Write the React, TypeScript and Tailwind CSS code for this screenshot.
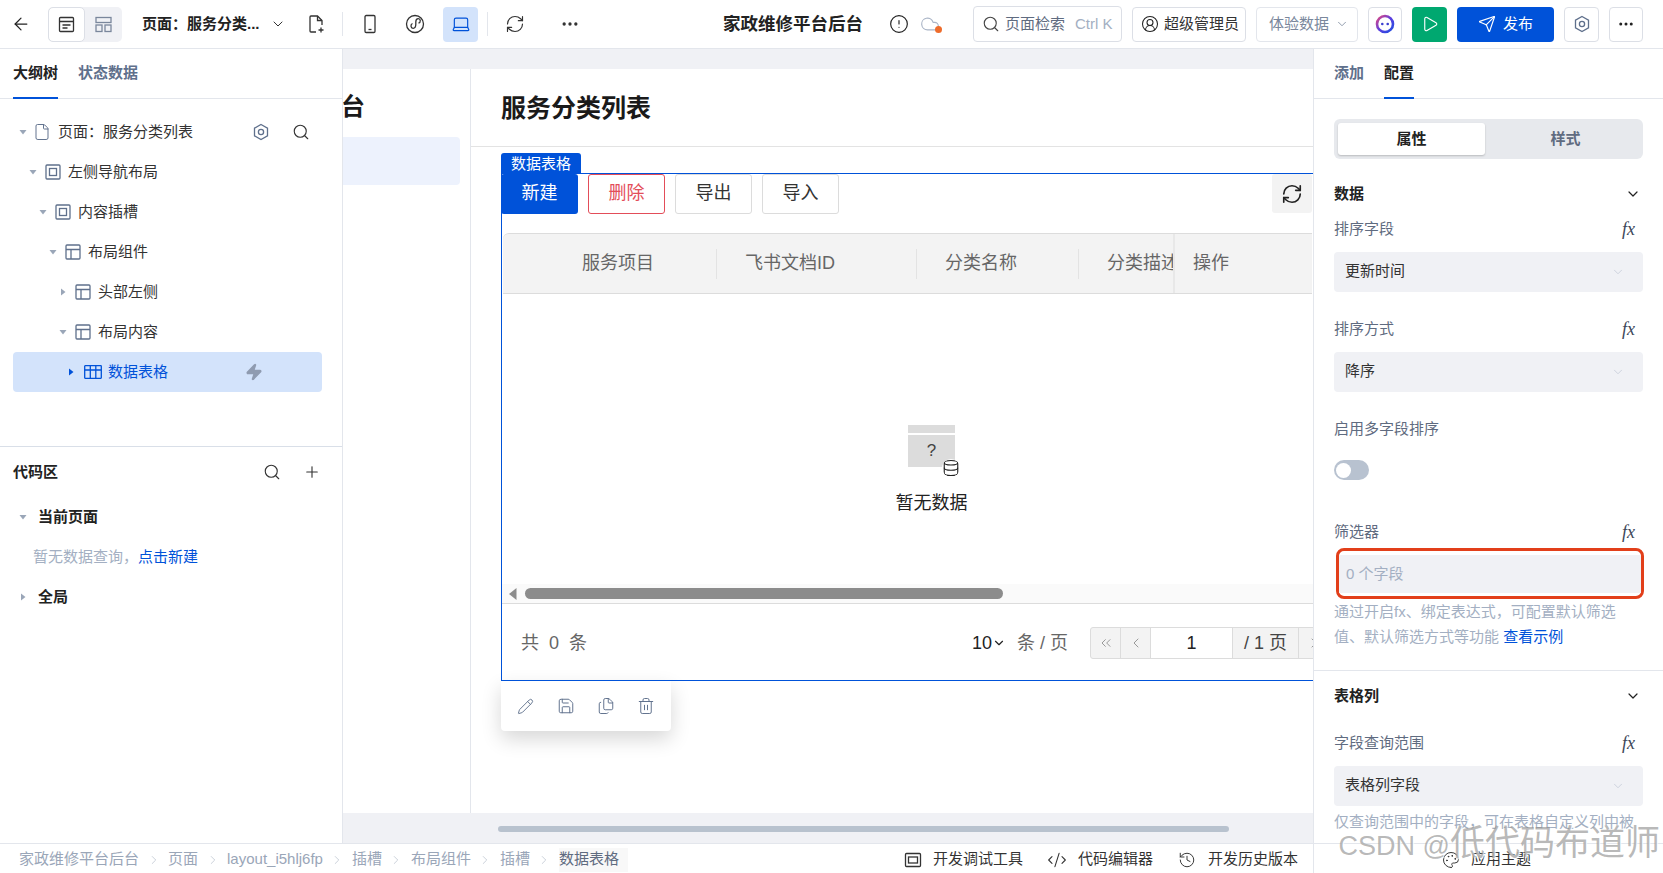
import { ArrowLeft, ChevronDown, ChevronLeft, ChevronRight, ChevronsLeft, CircleAlert, Cloud, CodeXml, Files, Ellipsis, File, History, Laptop, Palette, Pencil, Play, Plus, RefreshCw, Save, Search, Send, Trash2, Zap, CircleUserRound, Database } from "lucide-react";

function Caret({ open, color = "#9aa6b8" }: { open: boolean; color?: string }) {
  return (
    <svg width="10" height="10" viewBox="0 0 10 10" className="flex-none">
      {open ? <path d="M1.5 3h7L5 7.5z" fill={color} /> : <path d="M3 1.5v7L7.5 5z" fill={color} />}
    </svg>
  );
}

function HexIcon({ size = 18 }: { size?: number }) {
  return (
    <svg width={size} height={size} viewBox="0 0 18 18" fill="none" stroke="currentColor" strokeWidth="1.3" className="flex-none">
      <path d="M9 1.5l6.5 3.7v7.6L9 16.5l-6.5-3.7V5.200z" />
      <circle cx="9" cy="9" r="2.600" />
    </svg>
  );
}

function SlotIcon() {
  return (
    <svg width="16" height="16" viewBox="0 0 16 16" fill="none" stroke="#5f708c" strokeWidth="1.300" className="flex-none">
      <rect x="1" y="1" width="14" height="14" rx="1" />
      <rect x="4.500" y="4.500" width="7" height="7" />
    </svg>
  );
}

function LayoutIcon() {
  return (
    <svg width="16" height="16" viewBox="0 0 16 16" fill="none" stroke="#5f708c" strokeWidth="1.300" className="flex-none">
      <rect x="1" y="1" width="14" height="14" rx="1" />
      <path d="M1 5.500h14M6 5.500V15" />
    </svg>
  );
}

function GridIcon() {
  return (
    <svg width="18" height="14" viewBox="0 0 18 14" fill="none" stroke="#0052d9" strokeWidth="1.300" className="flex-none">
      <rect x="0.700" y="0.700" width="16.600" height="12.600" rx="0.500" />
      <path d="M0.700 5h16.600M6.300 0.700v12.600M11.800 0.700v12.600" />
    </svg>
  );
}

function Fx() {
  return <span className="[font-family:'Liberation_Serif',serif] italic text-[18px] leading-none text-[#3c4658]">fx</span>;
}

const treeRows = [
  { label: "左侧导航布局", pl: "pl-[15px]", open: true, icon: <SlotIcon /> },
  { label: "内容插槽", pl: "pl-[25px]", open: true, icon: <SlotIcon /> },
  { label: "布局组件", pl: "pl-[35px]", open: true, icon: <LayoutIcon /> },
  { label: "头部左侧", pl: "pl-[45px]", open: false, icon: <LayoutIcon /> },
  { label: "布局内容", pl: "pl-[45px]", open: true, icon: <LayoutIcon /> },
];

function TopBar() {
  return (
    <div className="h-[49px] flex-none flex items-center border-b border-[#e3e6ec] bg-white text-[15px] whitespace-nowrap">
      <ArrowLeft size={20} strokeWidth={1.5} className="ml-[11px] flex-none text-[#222]" />
      <div className="ml-[17px] flex h-[35px] w-[74px] flex-none rounded-[5px] bg-[#f0f1f5]">
        <div className="flex w-[37px] items-center justify-center rounded-[5px] border border-[#dcdfe6] bg-white">
          <svg width="17" height="17" viewBox="0 0 17 17" fill="none" stroke="#333" strokeWidth="1.300"><rect x="1.500" y="1.500" width="14" height="14" rx="1" /><path d="M1.500 5.500h14M4.500 9h8M4.500 12h5" /></svg>
        </div>
        <div className="flex w-[37px] items-center justify-center">
          <svg width="17" height="17" viewBox="0 0 17 17" fill="none" stroke="#7a879c" strokeWidth="1.300"><rect x="1" y="1.500" width="15" height="5" /><rect x="1" y="9" width="6" height="6.500" /><rect x="10" y="9" width="6" height="6.500" /></svg>
        </div>
      </div>
      <span className="ml-[20px] w-[116px] flex-none font-bold text-[#222]">页面：服务分类...</span>
      <ChevronDown size={16} strokeWidth={1.5} className="ml-[12px] flex-none text-[#333]" />
      <svg width="20" height="20" viewBox="0 0 20 20" fill="none" stroke="#333" strokeWidth="1.300" className="ml-[20px] flex-none">
        <path d="M10 18H5a1 1 0 0 1-1-1V3a1 1 0 0 1 1-1h6.500L16 6.500V11" />
        <path d="M11.500 2v4.500H16M15 13.500v5M12.500 16h5" />
      </svg>
      <div className="ml-[16px] h-[24px] w-px flex-none bg-[#e3e6ec]" />
      <svg width="20" height="20" viewBox="0 0 20 20" fill="none" stroke="#333" strokeWidth="1.300" className="ml-[17px] flex-none">
        <rect x="5" y="1.500" width="10" height="17" rx="1.200" />
        <path d="M8.500 15.500h3" />
      </svg>
      <svg width="20" height="20" viewBox="0 0 20 20" fill="none" stroke="#333" strokeWidth="1.300" className="ml-[25px] flex-none">
        <circle cx="10" cy="10" r="8.500" />
        <path d="M7.500 9.500c-2.200 1-2 4.800.6 4.800 2.200 0 2.700-1.800 2.700-4V8c0-2 1-3.300 2.500-3.300 2.400 0 2.800 3.600.2 4.500" />
      </svg>
      <div className="ml-[18px] flex h-[35px] w-[35px] flex-none items-center justify-center rounded-[4px] bg-[#d3e3fb]">
        <Laptop size={20} strokeWidth={1.400} className="text-[#0052d9]" />
      </div>
      <div className="ml-[9px] h-[24px] w-px flex-none bg-[#e3e6ec]" />
      <RefreshCw size={20} strokeWidth={1.400} className="ml-[17px] flex-none text-[#333]" />
      <Ellipsis size={20} className="ml-[35px] flex-none text-[#333]" />
      <span className="ml-[143px] w-[140px] flex-none text-[17.500px] font-bold text-[#222]">家政维修平台后台</span>
      <CircleAlert size={20} strokeWidth={1.400} className="ml-[26px] flex-none text-[#222]" />
      <div className="relative ml-[11px] flex-none">
        <Cloud size={20} strokeWidth={1.400} className="text-[#a9b4c6]" />
        <span className="absolute bottom-[1px] right-[-2px] h-[7px] w-[7px] rounded-full bg-[#ee6c2b]" />
      </div>
      <div className="ml-[33px] flex h-[36px] w-[149px] flex-none items-center rounded-[4px] border border-[#dcdfe6] pl-[8px] text-[#5f6b80]">
        <Search size={18} strokeWidth={1.500} className="text-[#444]" />
        <span className="ml-[5px]">页面检索</span>
        <span className="ml-[10px] text-[#a3afc2]">Ctrl K</span>
      </div>
      <div className="ml-[10px] flex h-[35px] w-[114px] flex-none items-center rounded-[4px] border border-[#dcdfe6] pl-[8px] text-[#333]">
        <CircleUserRound size={18} strokeWidth={1.400} className="text-[#222]" />
        <span className="ml-[5px]">超级管理员</span>
      </div>
      <div className="ml-[10px] flex h-[35px] w-[102px] flex-none items-center rounded-[4px] border border-[#e3e6ec] pl-[12px] text-[#7a879c]">
        <span>体验数据</span>
        <ChevronDown size={14} strokeWidth={1.400} className="ml-[6px]" />
      </div>
      <div className="ml-[10px] flex h-[35px] w-[34px] flex-none items-center justify-center rounded-[4px] border border-[#dcdfe6]">
        <svg width="20" height="20" viewBox="0 0 20 20" fill="none">
          <defs>
            <linearGradient id="botRing" x1="0" y1="0" x2="1" y2="1">
              <stop offset="0" stopColor="#e4487f" />
              <stop offset="0.500" stopColor="#5b3fe0" />
              <stop offset="1" stopColor="#1d4fe0" />
            </linearGradient>
          </defs>
          <circle cx="10" cy="10" r="8" stroke="url(#botRing)" strokeWidth="2.600" />
          <circle cx="7.300" cy="10" r="1.300" fill="#3b3fd0" />
          <circle cx="12.700" cy="10" r="1.300" fill="#3b3fd0" />
        </svg>
      </div>
      <div className="ml-[10px] flex h-[35px] w-[35px] flex-none items-center justify-center rounded-[4px] bg-[#00a870]">
        <Play size={18} strokeWidth={1.500} className="text-white" />
      </div>
      <div className="ml-[10px] flex h-[35px] w-[97px] flex-none items-center justify-center gap-[7px] rounded-[4px] bg-[#0052d9] text-white">
        <Send size={18} strokeWidth={1.500} />
        <span>发布</span>
      </div>
      <div className="ml-[10px] flex h-[35px] w-[35px] flex-none items-center justify-center rounded-[4px] border border-[#dcdfe6] text-[#5f708c]">
        <HexIcon />
      </div>
      <div className="ml-[10px] flex h-[35px] w-[34px] flex-none items-center justify-center rounded-[4px] border border-[#dcdfe6] text-[#222]">
        <Ellipsis size={18} />
      </div>
    </div>
  );
}

function LeftPanel() {
  return (
    <div className="flex w-[343px] flex-none flex-col border-r border-[#e3e6ec] bg-white text-[15px] text-[#333] whitespace-nowrap">
      <div className="flex h-[50px] flex-none gap-[20px] border-b border-[#e3e6ec] px-[13px]">
        <div className="-mb-px flex items-center border-b-2 border-[#0052d9] font-bold text-[#222]">大纲树</div>
        <div className="flex items-center font-bold text-[#5f708c]">状态数据</div>
      </div>
      <div className="h-[348px] flex-none border-b border-[#d9dfe8] pt-[13px]">
        <div className="mx-[13px] flex h-[40px] items-center pl-[5px]">
          <Caret open />
          <File size={18} strokeWidth={1.300} className="ml-[5px] flex-none text-[#5f708c]" />
          <span className="ml-[7px] w-[194px]">页面：服务分类列表</span>
          <span className="text-[#5f708c]"><HexIcon /></span>
          <Search size={18} strokeWidth={1.500} className="ml-[22px] text-[#333]" />
        </div>
        {treeRows.map((r) => (
          <div key={r.label} className={`mx-[13px] flex h-[40px] items-center gap-[7px] ${r.pl}`}>
            <Caret open={r.open} />
            {r.icon}
            <span>{r.label}</span>
          </div>
        ))}
        <div className="mx-[13px] flex h-[40px] w-[309px] items-center rounded-[4px] bg-[#d3e3fb] pl-[53px] text-[#0052d9]">
          <Caret open={false} color="#0052d9" />
          <span className="ml-[8px]"><GridIcon /></span>
          <span className="ml-[6px]">数据表格</span>
          <Zap size={18} className="ml-[77px] fill-[#8f9bb0] text-[#8f9bb0]" />
        </div>
      </div>
      <div className="flex h-[50px] flex-none items-center px-[13px]">
        <span className="w-[251px] font-bold text-[#222]">代码区</span>
        <Search size={18} strokeWidth={1.500} className="-ml-px text-[#333]" />
        <Plus size={18} strokeWidth={1.500} className="ml-[22px] text-[#333]" />
      </div>
      <div className="flex h-[40px] flex-none items-center gap-[10px] pl-[18px]">
        <Caret open />
        <span className="font-bold text-[#222]">当前页面</span>
      </div>
      <div className="flex h-[40px] flex-none items-center pl-[33px] text-[#a3afc2]">
        暂无数据查询，<span className="text-[#0052d9]">点击新建</span>
      </div>
      <div className="flex h-[40px] flex-none items-center gap-[10px] pl-[18px]">
        <Caret open={false} />
        <span className="font-bold text-[#222]">全局</span>
      </div>
    </div>
  );
}

function OutlineButton({ label, danger }: { label: string; danger?: boolean }) {
  return (
    <div className={`flex h-[40px] w-[77px] items-center justify-center rounded-[3px] border bg-white pb-[2px] ${danger ? "border-[#e34d59] text-[#e34d59]" : "border-[#dcdcdc] text-[#333]"}`}>
      {label}
    </div>
  );
}

function DataTable() {
  return (
    <div className="relative ml-[30px] mt-[26px] h-[508px] flex-none overflow-visible border-t border-b border-l border-[#0052d9] text-[18px]">
      <div className="absolute -left-px -top-[21px] flex h-[20px] w-[80px] items-center justify-center rounded-t-[3px] bg-[#0052d9] text-[15px] leading-none text-white">数据表格</div>
      <div className="flex h-[40px] gap-[10px]">
        <div className="-ml-px flex h-[40px] w-[77px] items-center justify-center rounded-[3px] bg-[#0052d9] pb-[2px] text-white">新建</div>
        <OutlineButton label="删除" danger />
        <OutlineButton label="导出" />
        <OutlineButton label="导入" />
        <div className="ml-auto mr-[1px] flex h-[39px] w-[40px] items-center justify-center rounded-[3px] bg-[#f3f3f3]">
          <RefreshCw size={22} strokeWidth={1.800} className="text-[#222]" />
        </div>
      </div>
      <div className="ml-px mt-[19px] mr-px flex h-[61px] overflow-hidden rounded-tl-[6px] border-t border-b border-[#dcdcdc] bg-[#f3f3f3] text-[#666]">
        <div className="flex w-[213px] flex-none items-center pl-[79px]">服务项目</div>
        <div className="my-auto h-[30px] w-px flex-none bg-[#e3e3e3]" />
        <div className="flex w-[199px] flex-none items-center pl-[28px]">飞书文档ID</div>
        <div className="my-auto h-[30px] w-px flex-none bg-[#e3e3e3]" />
        <div className="flex w-[161px] flex-none items-center pl-[28px]">分类名称</div>
        <div className="my-auto h-[30px] w-px flex-none bg-[#e3e3e3]" />
        <div className="flex w-[94px] flex-none items-center overflow-hidden pl-[28px] whitespace-nowrap">分类描述</div>
        <div className="flex flex-1 items-center border-l-2 border-[#e8e8e8] pl-[18px]">操作</div>
      </div>
      <div className="flex h-[290px] flex-col items-center pl-[48px] pt-[131px]">
        <div className="relative h-[42px] w-[47px] flex-none">
          <div className="h-[8px] bg-[#dcdcdc]" />
          <div className="mt-[2px] flex h-[32px] items-center justify-center bg-[#dcdcdc] text-[17px] text-[#444]">?</div>
          <Database size={18} strokeWidth={1.500} className="absolute -bottom-[10px] -right-[5px] rounded-full bg-white text-[#222]" />
        </div>
        <div className="mt-[23px] leading-[26px] text-[#222]">暂无数据</div>
      </div>
      <div className="flex h-[20px] items-center border-b border-[#dcdcdc] bg-[#fafafa] pl-[7px]">
        <svg width="8" height="12" viewBox="0 0 8 12" className="flex-none"><path d="M7.500 0v12L0 6z" fill="#8c8c8c" /></svg>
        <div className="ml-[8px] h-[11px] w-[478px] rounded-full bg-[#8c8c8c]" />
      </div>
      <div className="flex h-[78px] items-center overflow-hidden whitespace-nowrap">
        <div className="w-[470px] flex-none pl-[19px] text-[#666]">共&nbsp;&nbsp;0&nbsp;&nbsp;条</div>
        <span className="text-[#222]">10</span>
        <ChevronDown size={14} strokeWidth={2} className="flex-none text-[#222]" />
        <span className="ml-[11px] w-[73px] flex-none text-[#666]">条 / 页</span>
        <div className="flex h-[32px] flex-none rounded-l-[3px] border border-[#dcdcdc] bg-[#f3f3f3] text-[#444]">
          <div className="flex w-[30px] items-center justify-center border-r border-[#dcdcdc]"><ChevronsLeft size={16} strokeWidth={1.500} className="text-[#999]" /></div>
          <div className="flex w-[30px] items-center justify-center border-r border-[#dcdcdc]"><ChevronLeft size={16} strokeWidth={1.500} className="text-[#999]" /></div>
          <div className="flex w-[82px] items-center justify-center border-r border-[#dcdcdc] bg-white text-[#222]">1</div>
          <div className="flex w-[66px] items-center justify-center border-r border-[#dcdcdc]">/ 1 页</div>
          <div className="flex w-[30px] items-center justify-center"><ChevronRight size={16} strokeWidth={1.500} className="text-[#999]" /></div>
        </div>
      </div>
    </div>
  );
}

function Canvas() {
  return (
    <div className="flex min-w-0 flex-1 flex-col bg-[#f0f1f5] pt-[20px]">
      <div className="flex h-[744px] flex-none overflow-hidden bg-white">
        <div className="w-[128px] flex-none overflow-hidden border-r border-[#e3e6ec]">
          <div className="-ml-[2px] flex h-[68px] items-center pt-[8px] text-[24px] font-bold leading-none text-[#1a1a1a]">台</div>
          <div className="h-[48px] w-[117px] rounded-r-[4px] bg-[#edf2fd]" />
        </div>
        <div className="flex min-w-0 flex-1 flex-col">
          <div className="flex h-[78px] flex-none items-center border-b border-[#e3e3e3] pl-[30px] pt-[2px] text-[25px] font-bold text-[#1a1a1a]">服务分类列表</div>
          <DataTable />
          <div className="ml-[30px] flex h-[50px] w-[170px] flex-none items-center rounded-b-[4px] bg-white pl-[16px] text-[#5f708c] shadow-[0_8px_20px_rgba(0,0,0,0.16)]">
            <Pencil size={17} strokeWidth={1.300} />
            <Save size={18} strokeWidth={1.300} className="ml-[23px]" />
            <Files size={18} strokeWidth={1.300} className="ml-[22px]" />
            <Trash2 size={18} strokeWidth={1.300} className="ml-[22px]" />
          </div>
        </div>
      </div>
      <div className="flex flex-1 items-center pl-[155px]">
        <div className="mt-[1px] h-[6px] w-[731px] rounded-full bg-[#b8c2ce]" />
      </div>
    </div>
  );
}

function Field({ label, value, className }: { label: string; value: string; className: string }) {
  return (
    <>
      <div className={`flex h-[24px] items-center justify-between pr-[8px] text-[#5f6b80] ${className}`}>
        <span>{label}</span>
        <Fx />
      </div>
      <div className="mt-[11px] flex h-[40px] items-center justify-between rounded-[4px] bg-[#f0f1f5] pb-[1px] pl-[11px] pr-[18px] text-[#333]">
        <span>{value}</span>
        <ChevronDown size={14} strokeWidth={1.300} className="text-[#c2c9d6]" />
      </div>
    </>
  );
}

function RightPanel() {
  return (
    <div className="w-[350px] flex-none overflow-hidden border-l border-[#e3e6ec] bg-white text-[15px] whitespace-nowrap">
      <div className="flex h-[50px] gap-[20px] border-b border-[#e3e6ec] pl-[20px]">
        <div className="flex items-center font-bold text-[#5f708c]">添加</div>
        <div className="-mb-px flex items-center border-b-2 border-[#0052d9] font-bold text-[#222]">配置</div>
      </div>
      <div className="px-[20px]">
        <div className="mt-[20px] flex h-[40px] rounded-[6px] bg-[#e7e9ed] p-[4px] font-bold">
          <div className="flex w-[147px] items-center justify-center rounded-[3px] bg-white text-[#222] shadow-[0_1px_2px_rgba(0,0,0,0.2)]">属性</div>
          <div className="flex flex-1 items-center justify-center pl-[7px] text-[#5f6b80]">样式</div>
        </div>
        <div className="mt-[23px] flex h-[24px] items-center justify-between pr-[2px] font-bold text-[#222]">
          <span>数据</span>
          <ChevronDown size={16} strokeWidth={1.800} className="text-[#222]" />
        </div>
        <Field label="排序字段" value="更新时间" className="mt-[11px]" />
        <Field label="排序方式" value="降序" className="mt-[25px]" />
        <div className="mt-[25px] flex h-[24px] items-center text-[#5f6b80]">启用多字段排序</div>
        <div className="mt-[19px] flex h-[20px] w-[35px] items-center rounded-full bg-[#b8c2d0] pl-[2px]">
          <div className="h-[15px] w-[15px] rounded-full bg-white" />
        </div>
        <div className="mt-[40px] flex h-[24px] items-center justify-between pr-[8px] text-[#5f6b80]">
          <span>筛选器</span>
          <Fx />
        </div>
        <div className="ml-[2px] mt-[4px] h-[51px] w-[308px] rounded-[8px] border-[3px] border-[#e23f1a] bg-white pt-[4px]">
          <div className="flex h-[38px] items-center bg-[#f0f1f5] pl-[7px] text-[#a3afc2]">0 个字段</div>
        </div>
        <div className="leading-[25px] text-[#a3afc2]">
          通过开启fx、绑定表达式，可配置默认筛选<br />值、默认筛选方式等功能 <span className="text-[#0052d9]">查看示例</span>
        </div>
      </div>
      <div className="mt-[21px] border-t border-[#e3e6ec] px-[20px]">
        <div className="mt-[13px] flex h-[24px] items-center justify-between pr-[2px] font-bold text-[#222]">
          <span>表格列</span>
          <ChevronDown size={16} strokeWidth={1.800} className="text-[#222]" />
        </div>
        <Field label="字段查询范围" value="表格列字段" className="mt-[23px]" />
        <div className="mt-[3px] leading-[25px] text-[#a3afc2]">仅查询范围中的字段，可在表格自定义列中被</div>
      </div>
    </div>
  );
}

function BottomBar() {
  const crumbs = ["家政维修平台后台", "页面", "layout_i5hlj6fp", "插槽", "布局组件", "插槽"];
  return (
    <div className="relative z-10 flex h-[30px] flex-none items-center border-t border-[#e3e6ec] bg-white text-[15px] whitespace-nowrap">
      <div className="flex w-[904px] flex-none items-center pl-[19px] pt-[2px] text-[#9aa6b8]">
        {crumbs.map((c, i) => (
          <span key={i} className="flex items-center">
            {c}
            <ChevronRight size={14} strokeWidth={1.200} className="mx-[7.500px] flex-none text-[#b5bdca]" />
          </span>
        ))}
        <span className="flex h-[24px] w-[69px] items-center bg-[#f8f8f8] text-[#5f6b80]">数据表格</span>
      </div>
      <svg width="18" height="18" viewBox="0 0 18 18" fill="none" stroke="#333" strokeWidth="1.300" className="mt-[2px] flex-none">
        <rect x="1.500" y="2.500" width="15" height="13" rx="1" />
        <rect x="4.500" y="6" width="9" height="6" />
      </svg>
      <span className="ml-[11px] w-[90px] flex-none pt-[2px] text-[#333]">开发调试工具</span>
      <CodeXml size={20} strokeWidth={1.300} className="ml-[24px] mt-[2px] flex-none text-[#333]" />
      <span className="ml-[11px] w-[75px] flex-none pt-[2px] text-[#333]">代码编辑器</span>
      <History size={18} strokeWidth={1.300} className="ml-[25px] mt-[2px] flex-none text-[#333]" />
      <span className="ml-[12px] w-[90px] flex-none pt-[2px] text-[#333]">开发历史版本</span>
      <div className="ml-[15px] h-full w-px flex-none bg-[#e3e6ec]" />
      <Palette size={18} strokeWidth={1.300} className="ml-[128px] mt-[2px] flex-none text-[#333]" />
      <span className="ml-[11px] pt-[2px] text-[#333]">应用主题</span>
    </div>
  );
}

export default function App() {
  return (
    <div className="relative flex h-[873px] w-[1663px] flex-col overflow-hidden bg-white [font-family:'Liberation_Sans','Noto_Sans_CJK_SC',sans-serif]">
      <TopBar />
      <div className="flex h-[794px] flex-none overflow-hidden">
        <LeftPanel />
        <Canvas />
        <RightPanel />
      </div>
      <BottomBar />
      <div className="pointer-events-none absolute bottom-[13px] right-[3px] z-20 text-[35px] leading-none whitespace-nowrap text-[#8a8a8a]/60 [text-shadow:1px_1px_1px_rgba(255,255,255,0.9)]">
        <span className="text-[27px]">CSDN @</span>低代码布道师
      </div>
    </div>
  );
}
